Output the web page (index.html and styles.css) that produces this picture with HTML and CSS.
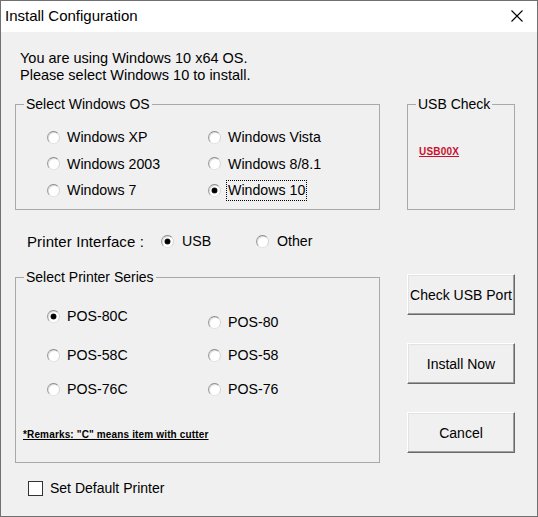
FILE: index.html
```html
<!DOCTYPE html>
<html lang="en">
<head>
<meta charset="utf-8">
<title>Install Configuration</title>
<link rel="stylesheet" href="styles.css">
</head>
<body>
<div class="window">
  <header class="titlebar">
    <span class="title">Install Configuration</span>
    <span class="close" aria-label="Close">
      <svg width="12" height="12" viewBox="0 0 12 12"><path d="M0.5 0.5 L11.5 11.5 M11.5 0.5 L0.5 11.5" stroke="#000" stroke-width="1.1" fill="none"/></svg>
    </span>
  </header>

  <main class="content">
    <p class="intro">You are using Windows 10 x64 OS.<br>Please select Windows 10 to install.</p>

    <div class="row top-row">
      <fieldset class="group os">
        <legend>Select Windows OS</legend>
        <div class="opts os-opts">
          <label class="opt"><span class="radio"></span>Windows XP</label>
          <label class="opt"><span class="radio"></span>Windows Vista</label>
          <label class="opt"><span class="radio"></span>Windows 2003</label>
          <label class="opt"><span class="radio"></span>Windows 8/8.1</label>
          <label class="opt"><span class="radio"></span>Windows 7</label>
          <label class="opt"><span class="radio on"></span><span class="focus">Windows 10</span></label>
        </div>
      </fieldset>
      <fieldset class="group usb">
        <legend>USB Check</legend>
        <span class="usb-port">USB00X</span>
      </fieldset>
    </div>

    <div class="iface">
      <span class="iface-label">Printer Interface :</span>
      <label class="opt iface-opt"><span class="radio on"></span>USB</label>
      <label class="opt iface-opt"><span class="radio"></span>Other</label>
    </div>

    <div class="row bottom-row">
      <fieldset class="group series">
        <legend>Select Printer Series</legend>
        <div class="opts series-opts">
          <label class="opt"><span class="radio on"></span>POS-80C</label>
          <label class="opt shifted"><span class="radio"></span>POS-80</label>
          <label class="opt"><span class="radio"></span>POS-58C</label>
          <label class="opt"><span class="radio"></span>POS-58</label>
          <label class="opt"><span class="radio"></span>POS-76C</label>
          <label class="opt"><span class="radio"></span>POS-76</label>
        </div>
        <p class="remarks">*Remarks: "C" means item with cutter</p>
      </fieldset>
      <div class="actions">
        <button class="btn">Check USB Port</button>
        <button class="btn">Install Now</button>
        <button class="btn">Cancel</button>
      </div>
    </div>

    <label class="check"><span class="box"></span>Set Default Printer</label>
  </main>
</div>
</body>
</html>
```
FILE: styles.css
```css
* { box-sizing: border-box; }

html, body {
  margin: 0;
  padding: 0;
  background: #f0f0f0;
}

body {
  font-family: "Liberation Sans", Arial, sans-serif;
  font-size: 14px;
  color: #000;
}

.window {
  width: 538px;
  height: 517px;
  border: 1px solid #707070;
  background: #f0f0f0;
  display: flex;
  flex-direction: column;
}

/* title bar */
.titlebar {
  height: 31px;
  background: #fff;
  display: flex;
  align-items: center;
  justify-content: space-between;
  padding: 0 14px 0 4px;
  flex: none;
}

.title {
  font-size: 15px;
  line-height: 18px;
  margin-top: -1px;
}

.close {
  display: flex;
  width: 12px;
  height: 12px;
  margin-top: -1px;
}

/* dialog body */
.content {
  padding: 18px 0 0 14px;
}

.intro {
  margin: 0;
  padding-left: 5px;
  font-size: 14.5px;
  line-height: 17px;
}

.row {
  display: grid;
  grid-template-columns: 365px 108px;
  column-gap: 27px;
}

.top-row { margin-top: 12px; }
.bottom-row { margin-top: 18px; align-items: start; }

/* etched group boxes; horizontal padding lives on the children so the legend stays put */
.group {
  margin: 0;
  border: 1px solid #a9a9a9;
  min-inline-size: 0;
  padding-left: 0;
  padding-right: 0;
}

.group legend {
  padding: 0 2px;
  margin-left: 8px;
  line-height: 16px;
  font-size: 14px;
}

.os {
  padding-top: 12px;
  padding-bottom: 5.5px;
}

.opts {
  display: grid;
  grid-template-columns: 161px auto;
  margin-left: 31px;
}

.opt {
  display: flex;
  align-items: center;
  gap: 7px;
  white-space: nowrap;
  font-size: 14.2px;
}

.os-opts .opt { height: 26.5px; }

.radio {
  width: 13px;
  height: 13px;
  flex: none;
  border-radius: 50%;
  background: #fff;
  border: 1px solid;
  border-color: #8a8a8a #d4d4d4 #e2e2e2 #9a9a9a;
  box-shadow: inset 1px 1px 0 #dedede;
  display: flex;
  align-items: center;
  justify-content: center;
}

.radio.on::after {
  content: "";
  width: 5px;
  height: 5px;
  border-radius: 50%;
  background: #000;
  box-shadow: 0 0 0 0.5px #333;
}

.focus {
  border: 1px dotted #000;
  padding: 1px 1px;
  margin-left: -2px;
  line-height: 17px;
}

.usb {
  padding-top: 34px;
}

.usb-port {
  display: block;
  margin-left: 11px;
  font-size: 10px;
  font-weight: bold;
  line-height: 12px;
  color: #c8102e;
  text-decoration: underline;
  letter-spacing: 0.2px;
}

/* printer interface line */
.iface {
  margin-top: 21px;
  height: 20px;
  display: flex;
  align-items: center;
  padding-left: 12px;
}

.iface-label {
  width: 134px;
  flex: none;
  font-size: 15px;
  letter-spacing: 0.1px;
}

.iface-opt {
  gap: 8px;
  width: 95px;
}

/* printer series */
.series {
  padding-top: 21px;
  padding-bottom: 20px;
}

.series-opts {
  grid-template-rows: 39px 34px 34px;
  align-items: start;
}

.series-opts .opt { height: 20px; }
.series-opts .shifted { margin-top: 6px; }

.remarks {
  margin: 15px 0 0 7px;
  font-size: 10px;
  font-weight: bold;
  line-height: 14px;
  letter-spacing: 0.15px;
  text-decoration: underline;
}

/* action buttons */
.actions {
  display: flex;
  flex-direction: column;
  gap: 28px;
  padding-top: 5px;
}

.btn {
  height: 41px;
  width: 108px;
  font: inherit;
  color: #000;
  background: #f0f0f0;
  border: 1px solid;
  border-color: #fff #696969 #696969 #fff;
  box-shadow: inset -1px -1px 0 #a0a0a0, inset 1px 1px 0 #e3e3e3;
  padding: 0;
}

/* default printer checkbox */
.check {
  margin-top: 15px;
  height: 20px;
  display: flex;
  align-items: center;
  gap: 7px;
  padding-left: 13px;
}

.box {
  width: 15px;
  height: 15px;
  border: 1px solid #333;
  background: #fff;
  flex: none;
}
```
